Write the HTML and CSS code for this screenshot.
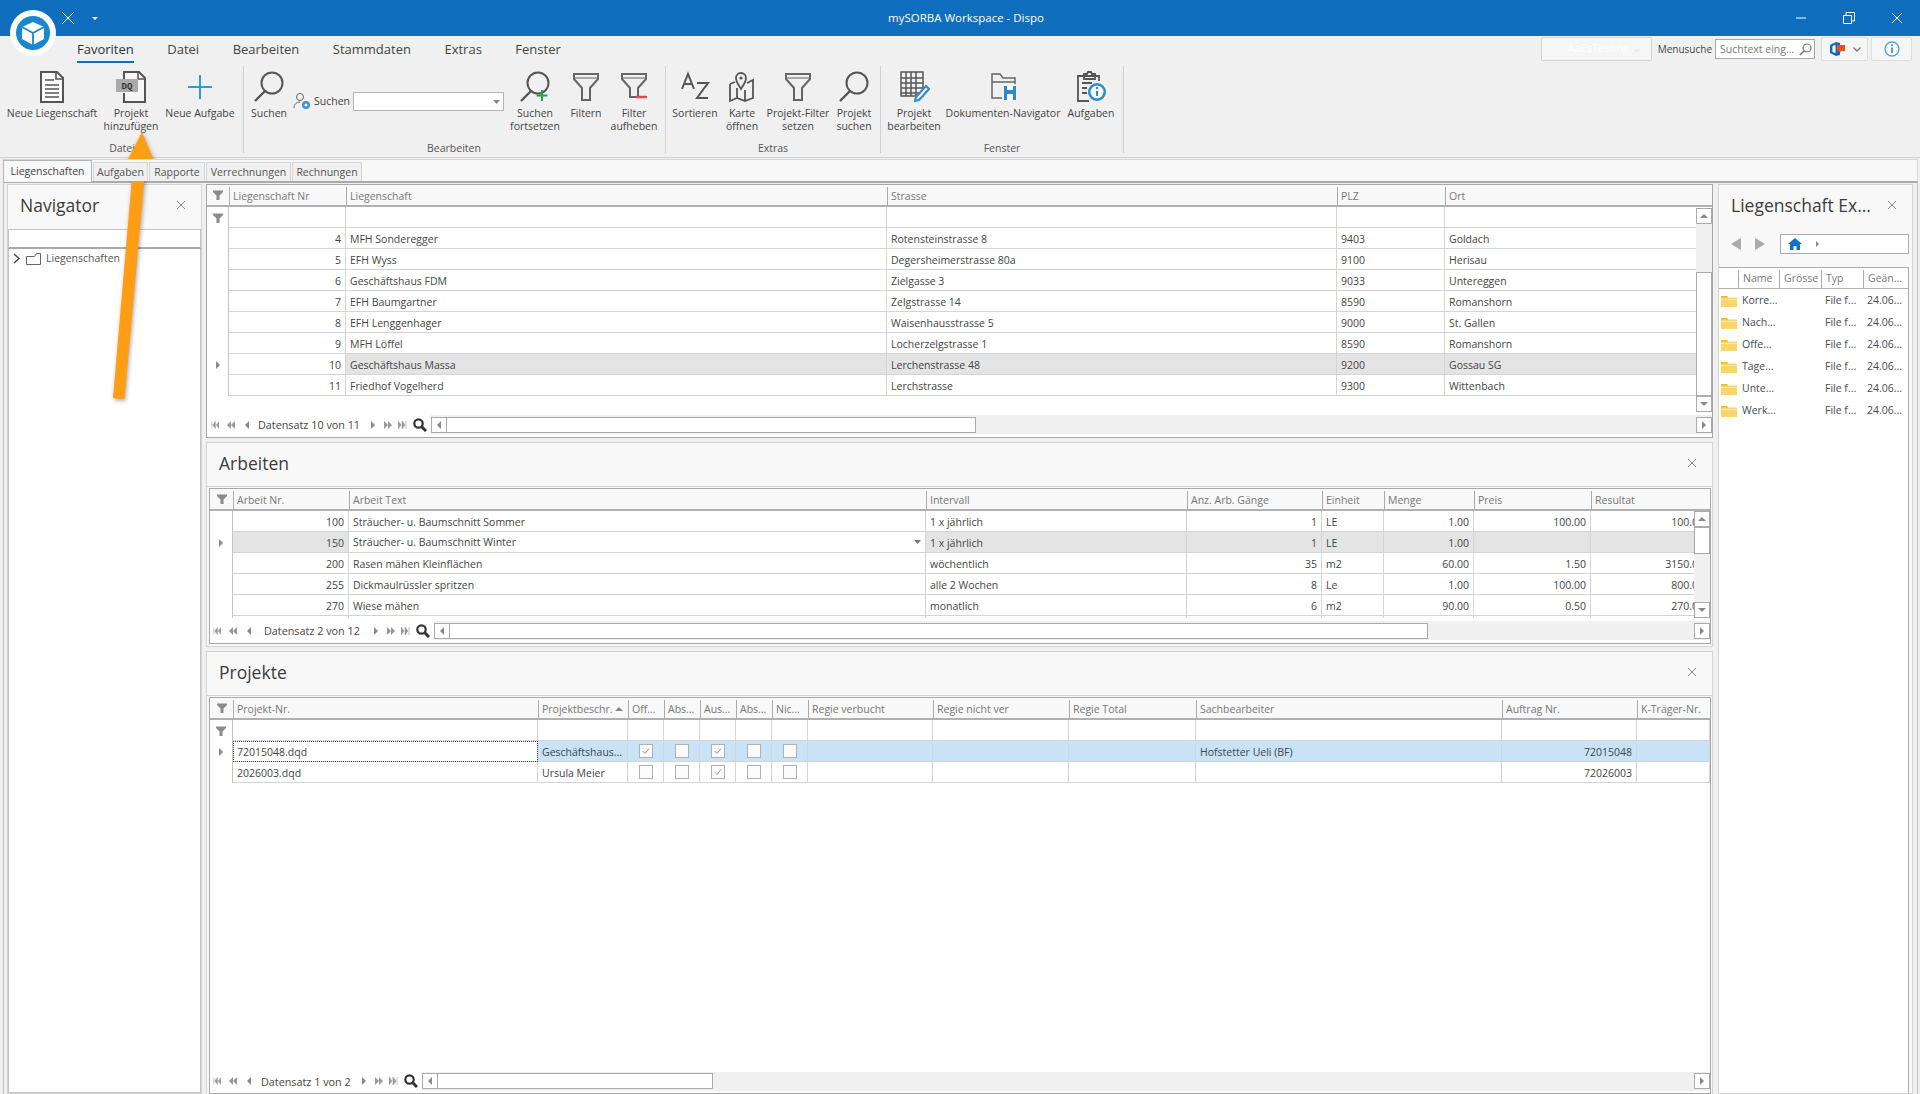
FILE: index.html
```html
<!DOCTYPE html>
<html lang="de">
<head>
    <meta charset="UTF-8">
    <title>mySORBA Workspace - Dispo</title>
    <link rel="stylesheet" href="styles.css">
</head>
<body>

    <svg class="defs" width="0" height="0">
        <symbol id="funnel" viewBox="0 0 12 12"><path d="M1 1.5h10V3L7.5 6.5V11h-3V6.5L1 3z" fill="#8a8a8a"/></symbol>
        <symbol id="big-funnel" viewBox="0 0 32 32"><path d="M4 3h24v5l-8 9v12h-8V17L4 8z" fill="none" stroke="#666" stroke-width="2"/><path d="M5 7h22" stroke="#aaa" stroke-width="2"/></symbol>
        <symbol id="lens" viewBox="0 0 32 32"><circle cx="19" cy="12" r="10.5" fill="none" stroke="#555" stroke-width="2"/><path d="M12 20L2 30" stroke="#555" stroke-width="2.4"/></symbol>
        <symbol id="first" viewBox="0 0 9 8"><path d="M1 0v8M5 0v8L2 4zM9 0v8L6 4z" fill="#999" stroke="#999" stroke-width=".6"/></symbol>
        <symbol id="pprev" viewBox="0 0 8 8"><path d="M4 0v8L0 4zM8 0v8L4 4z" fill="#999"/></symbol>
        <symbol id="prev" viewBox="0 0 4 8"><path d="M4 0v8L0 4z" fill="#888"/></symbol>
        <symbol id="next" viewBox="0 0 4 8"><path d="M0 0v8l4-4z" fill="#888"/></symbol>
        <symbol id="nnext" viewBox="0 0 8 8"><path d="M0 0v8l4-4zM4 0v8l4-4z" fill="#999"/></symbol>
        <symbol id="last" viewBox="0 0 9 8"><path d="M8 0v8M0 0v8l3-4zM4 0v8l3-4z" fill="#999" stroke="#999" stroke-width=".6"/></symbol>
        <symbol id="mag" viewBox="0 0 14 14"><circle cx="5.5" cy="5.5" r="4.2" fill="none" stroke="#333" stroke-width="2.2"/><path d="M8.5 8.5L13 13" stroke="#333" stroke-width="3"/></symbol>
        <symbol id="close" viewBox="0 0 10 10"><path d="M1 1l8 8M9 1l-8 8" stroke="#888" stroke-width="1"/></symbol>
        <symbol id="check" viewBox="0 0 14 14"><path d="M4 7.5l2 2 4-5" fill="none" stroke="#999" stroke-width="1"/></symbol>
        <symbol id="folder" viewBox="0 0 16 11"><path d="M0 0h6l1 1.5h9V11H0z" fill="#fbd56b"/><path d="M0 0h6l1 1.5H0z" fill="#f3b32c"/><path d="M0 3h16v1H0z" fill="#fde9ac"/></symbol>
    </svg>

    <header class="titlebar">
        <svg class="tb-x" width="12" height="12" viewBox="0 0 12 12"><path d="M0 0l12 12M12 0L0 12" stroke="#fff" stroke-width="1"/></svg>
        <svg class="tb-drop" width="6" height="3" viewBox="0 0 6 3"><path d="M0 0h6L3 3z" fill="#fff"/></svg>
        <span class="tb-title">mySORBA Workspace - Dispo</span>
        <div class="tb-win">
            <svg width="12" height="12" viewBox="0 0 12 12"><path d="M1 6h10" stroke="#fff"/></svg>
            <svg width="12" height="12" viewBox="0 0 12 12"><path d="M.5 3.5h8v8h-8zM3 3.5V.5h8.500V9H8.500" fill="none" stroke="#fff"/></svg>
            <svg width="12" height="12" viewBox="0 0 12 12"><path d="M1 1l10 10M11 1L1 11" stroke="#fff"/></svg>
        </div>
    </header>

    <div class="logo">
        <svg width="46" height="46" viewBox="0 0 46 46">
            <circle cx="23" cy="23" r="23" fill="#fff"/>
            <circle cx="23" cy="23" r="17" fill="#1a86d0"/>
            <path d="M23 12l11 5v12l-11 6-11-6V17z" fill="#fff"/>
            <path d="M12 17l11 6 11-6M23 23v12" fill="none" stroke="#1a86d0" stroke-width="1.8"/>
        </svg>
    </div>

    <nav class="menu">
        <span class="menu-item active">Favoriten</span>
        <span class="menu-item">Datei</span>
        <span class="menu-item">Bearbeiten</span>
        <span class="menu-item">Stammdaten</span>
        <span class="menu-item">Extras</span>
        <span class="menu-item">Fenster</span>
        <div class="menu-right">
            <div class="ghost-btn">AaEsTesting <span class="ghost-arrow">&#8964;</span></div>
            <span class="menu-label">Menusuche</span>
            <div class="menu-search">
                <span>Suchtext eing...</span>
                <svg width="13" height="13" viewBox="0 0 13 13"><circle cx="8" cy="5" r="4" fill="none" stroke="#777" stroke-width="1.2"/><path d="M5 8l-4 4" stroke="#777" stroke-width="1.6"/></svg>
            </div>
            <div class="square-btn office">
                <svg width="22" height="14" viewBox="0 0 22 14"><path d="M1 3l6-3 4 1v12l-4 1-6-3z" fill="#0f6cbd"/><path d="M3.5 4l3-1v8l-3-1z" fill="#fff"/><path d="M8 3h8v6h-4l-1 2-1-2H8z" fill="#e8501c"/></svg>
                <svg width="8" height="5" viewBox="0 0 8 5"><path d="M.5.5L4 4 7.5.5" fill="none" stroke="#777" stroke-width="1.3"/></svg>
            </div>
            <div class="square-btn info">
                <svg width="16" height="16" viewBox="0 0 16 16"><circle cx="8" cy="8" r="7" fill="#fff" stroke="#4aa3e0" stroke-width="1.3"/><path d="M8 6.5V12" stroke="#2a86cc" stroke-width="1.6"/><circle cx="8" cy="4.3" r="1" fill="#2a86cc"/></svg>
            </div>
        </div>
    </nav>

    <section class="ribbon">
        <div class="rgroup g-datei">
            <div class="ritems">
                <div class="ritem w92">
                    <svg class="ricon" width="32" height="32" viewBox="0 0 32 32"><path d="M5 1h16l6 6v24H5z" fill="#fff" stroke="#555" stroke-width="2"/><path d="M20 1v7h7M9 9h9M9 14h14M9 18h14M9 22h14M9 26h14" fill="none" stroke="#555" stroke-width="1.6"/></svg>
                    <span>Neue Liegenschaft</span>
                </div>
                <div class="ritem w66">
                    <svg class="ricon" width="32" height="32" viewBox="0 0 32 32"><path d="M9 10V1h15l6 6v24H9V22" fill="#f6f6f6" stroke="#555" stroke-width="2"/><path d="M23 1v7h7" fill="none" stroke="#555" stroke-width="1.5"/><rect x="1" y="8" width="22" height="13" fill="#aaa"/><text x="12" y="18" class="dq">DQ</text></svg>
                    <span>Projekt<br>hinzufügen</span>
                </div>
                <div class="ritem w72">
                    <svg class="ricon" width="32" height="32" viewBox="0 0 32 32"><path d="M16 4v24M4 16h24" stroke="#3a96d6" stroke-width="2"/></svg>
                    <span>Neue Aufgabe</span>
                </div>
            </div>
            <div class="rlabel">Datei</div>
        </div>
        <div class="rgroup g-bearb">
            <div class="ritems">
                <div class="ritem w42">
                    <svg class="ricon"  width="32" height="32"><use href="#lens"/></svg>
                    <span>Suchen</span>
                </div>
                <div class="rsearch">
                    <svg width="18" height="18" viewBox="0 0 18 18"><circle cx="7" cy="5" r="3.5" fill="none" stroke="#666"/><path d="M1 16c0-4 3-6 6-6" fill="none" stroke="#666"/><circle cx="13" cy="13" r="4" fill="#3a96d6"/><circle cx="13" cy="13" r="1.5" fill="#fff"/></svg>
                    <span>Suchen</span>
                    <div class="rcombo"><svg width="7" height="4" viewBox="0 0 7 4"><path d="M0 0h7L3.5 4z" fill="#888"/></svg></div>
                </div>
                <div class="ritem w52">
                    <svg class="ricon" width="32" height="32" viewBox="0 0 32 32"><use href="#lens"/><path d="M23 19v11M17.5 24.5h11" stroke="#2e9e4f" stroke-width="2"/></svg>
                    <span>Suchen<br>fortsetzen</span>
                </div>
                <div class="ritem w50">
                    <svg class="ricon" width="32" height="32"><use href="#big-funnel"/></svg>
                    <span>Filtern</span>
                </div>
                <div class="ritem w46">
                    <svg class="ricon" width="32" height="32" viewBox="0 0 32 32"><path d="M4 3h24v5l-8 9v9h-8V17L4 8z" fill="none" stroke="#666" stroke-width="2"/><path d="M5 7h22" stroke="#aaa" stroke-width="2"/><path d="M18 26h11" stroke="#e04a4a" stroke-width="2.5"/></svg>
                    <span>Filter<br>aufheben</span>
                </div>
            </div>
            <div class="rlabel">Bearbeiten</div>
        </div>
        <div class="rgroup g-extras">
            <div class="ritems">
                <div class="ritem w48">
                    <svg class="ricon" width="32" height="32" viewBox="0 0 32 32"><path d="M3 18L9 3l6 15M5 13h8M18 12h11L18 27h11" fill="none" stroke="#555" stroke-width="2"/></svg>
                    <span>Sortieren</span>
                </div>
                <div class="ritem w46">
                    <svg class="ricon" width="32" height="32" viewBox="0 0 32 32"><path d="M4 13v17l7-3 8 3 8-3V9l-6 3M4 13l5-2M11 17v10M19 19v11" fill="none" stroke="#555" stroke-width="1.8"/><path d="M15 18c-3-5-5-7-5-11a5 5 0 0 1 10 0c0 4-2 6-5 11z" fill="#f0f0f0" stroke="#555" stroke-width="1.8"/><circle cx="15" cy="7" r="1.6" fill="#555"/></svg>
                    <span>Karte<br>öffnen</span>
                </div>
                <div class="ritem w66">
                    <svg class="ricon" width="32" height="32"><use href="#big-funnel"/></svg>
                    <span>Projekt-Filter<br>setzen</span>
                </div>
                <div class="ritem w46">
                    <svg class="ricon" width="32" height="32"><use href="#lens"/></svg>
                    <span>Projekt<br>suchen</span>
                </div>
            </div>
            <div class="rlabel">Extras</div>
        </div>
        <div class="rgroup g-fenster">
            <div class="ritems">
                <div class="ritem w56">
                    <svg class="ricon" width="32" height="32" viewBox="0 0 32 32"><path d="M3 1h22v24H3zM3 7h22M3 12h22M3 17h22M3 22h22M8 1v24M13 1v24M18 1v24" fill="none" stroke="#555" stroke-width="1.5"/><path d="M18 26l10-11 3 3-10 11-4 1z" fill="#fff" stroke="#2a8ad4" stroke-width="2"/></svg>
                    <span>Projekt<br>bearbeiten</span>
                </div>
                <div class="ritem w122">
                    <svg class="ricon" width="32" height="32" viewBox="0 0 32 32"><path d="M15 27H5V3h8l3 4h12v6M5 11h23" fill="none" stroke="#666" stroke-width="1.5"/><path d="M17 15h12v14H17z" fill="#2a8ad4"/><path d="M20 15h6v4h-6zM20 23h6v6h-6z" fill="#fff"/></svg>
                    <span>Dokumenten-Navigator</span>
                </div>
                <div class="ritem w54">
                    <svg class="ricon" width="32" height="32" viewBox="0 0 32 32"><path d="M24 10V5H3v25h11M9 8V3h3l1-2h3l1 2h3v5zM7 12h10M7 17h5M7 22h5" fill="none" stroke="#555" stroke-width="1.8"/><circle cx="22" cy="21" r="9" fill="#2a8ad4"/><circle cx="22" cy="21" r="6.5" fill="#fff"/><path d="M22 20v5" stroke="#2a8ad4" stroke-width="2"/><circle cx="22" cy="17" r="1.2" fill="#2a8ad4"/></svg>
                    <span>Aufgaben</span>
                </div>
            </div>
            <div class="rlabel">Fenster</div>
        </div>
    </section>

    <div class="pagetabs">
        <span class="ptab current">Liegenschaften</span>
        <span class="ptab w-auf">Aufgaben</span>
        <span class="ptab w-rap">Rapporte</span>
        <span class="ptab w-ver">Verrechnungen</span>
        <span class="ptab w-rec">Rechnungen</span>
    </div>

    <main class="workspace">

        <aside class="side navigator">
            <div class="side-head">
                <h2>Navigator</h2>
                <svg width="10" height="10"><use href="#close"/></svg>
            </div>
            <div class="side-input"></div>
            <div class="tree">
                <svg width="8" height="11" viewBox="0 0 8 11"><path d="M1 1l5 4.5L1 10" fill="none" stroke="#444" stroke-width="1.4"/></svg>
                <svg class="tree-folder" width="15" height="12" viewBox="0 0 15 12"><path d="M.5 3.5h8l2-3h4v11H.5z" fill="#fff" stroke="#666"/></svg>
                <span>Liegenschaften</span>
            </div>
        </aside>

        <div class="center">

            <div class="grid grid-one">
                <div class="row head cols-a">
                    <div class="ind"><svg width="12" height="12"><use href="#funnel"/></svg></div>
                    <div class="hc">Liegenschaft Nr</div>
                    <div class="hc">Liegenschaft</div>
                    <div class="hc">Strasse</div>
                    <div class="hc">PLZ</div>
                    <div class="hc">Ort</div>
                </div>
                <div class="grid-main">
                    <div class="rows">
                        <div class="row filter cols-a"><div class="ind"><svg width="12" height="12"><use href="#funnel"/></svg></div><div class="c"></div><div class="c"></div><div class="c"></div><div class="c"></div><div class="c"></div></div>
                        <div class="row cols-a"><div class="ind"></div><div class="c r">4</div><div class="c">MFH Sonderegger</div><div class="c">Rotensteinstrasse 8</div><div class="c">9403</div><div class="c">Goldach</div></div>
                        <div class="row cols-a"><div class="ind"></div><div class="c r">5</div><div class="c">EFH Wyss</div><div class="c">Degersheimerstrasse 80a</div><div class="c">9100</div><div class="c">Herisau</div></div>
                        <div class="row cols-a"><div class="ind"></div><div class="c r">6</div><div class="c">Geschäftshaus FDM</div><div class="c">Zielgasse 3</div><div class="c">9033</div><div class="c">Untereggen</div></div>
                        <div class="row cols-a"><div class="ind"></div><div class="c r">7</div><div class="c">EFH Baumgartner</div><div class="c">Zelgstrasse 14</div><div class="c">8590</div><div class="c">Romanshorn</div></div>
                        <div class="row cols-a"><div class="ind"></div><div class="c r">8</div><div class="c">EFH Lenggenhager</div><div class="c">Waisenhausstrasse 5</div><div class="c">9000</div><div class="c">St. Gallen</div></div>
                        <div class="row cols-a"><div class="ind"></div><div class="c r">9</div><div class="c">MFH Löffel</div><div class="c">Locherzelgstrasse 1</div><div class="c">8590</div><div class="c">Romanshorn</div></div>
                        <div class="row cols-a"><div class="ind"><svg width="4" height="8"><use href="#next"/></svg></div><div class="c r">10</div><div class="c sel">Geschäftshaus Massa</div><div class="c sel">Lerchenstrasse 48</div><div class="c sel">9200</div><div class="c sel">Gossau SG</div></div>
                        <div class="row cols-a"><div class="ind"></div><div class="c r">11</div><div class="c">Friedhof Vogelherd</div><div class="c">Lerchstrasse</div><div class="c">9300</div><div class="c">Wittenbach</div></div>
                    </div>
                    <div class="vscroll vs-one">
                        <div class="sbtn"><svg width="8" height="4" viewBox="0 0 8 4"><path d="M0 4h8L4 0z" fill="#888"/></svg></div>
                        <div class="vtrack"></div>
                        <div class="vthumb"></div>
                        <div class="sbtn"><svg width="8" height="4" viewBox="0 0 8 4"><path d="M0 0h8L4 4z" fill="#888"/></svg></div>
                    </div>
                </div>
                <div class="gnav nav-one">
                    <svg class="n-first" width="8" height="8"><use href="#first"/></svg>
                    <svg class="n-pprev" width="8" height="8"><use href="#pprev"/></svg>
                    <svg class="n-prev" width="4" height="8"><use href="#prev"/></svg>
                    <span class="nav-text">Datensatz 10 von 11</span>
                    <svg class="n-next" width="4" height="8"><use href="#next"/></svg>
                    <svg class="n-nnext" width="8" height="8"><use href="#nnext"/></svg>
                    <svg class="n-last" width="9" height="8"><use href="#last"/></svg>
                    <svg class="n-mag" width="14" height="14"><use href="#mag"/></svg>
                    <div class="hscroll">
                        <div class="sbtn"><svg width="4" height="8"><use href="#prev"/></svg></div>
                        <div class="hthumb"></div>
                        <div class="hrest"></div>
                        <div class="sbtn"><svg width="4" height="8"><use href="#next"/></svg></div>
                    </div>
                </div>
            </div>

            <section class="panel panel-arbeiten">
                <div class="panel-head">
                    <h2>Arbeiten</h2>
                    <svg width="10" height="10"><use href="#close"/></svg>
                </div>
                <div class="grid grid-two">
                    <div class="row head cols-b">
                        <div class="ind"><svg width="12" height="12"><use href="#funnel"/></svg></div>
                        <div class="hc">Arbeit Nr.</div>
                        <div class="hc">Arbeit Text</div>
                        <div class="hc">Intervall</div>
                        <div class="hc">Anz. Arb. Gänge</div>
                        <div class="hc">Einheit</div>
                        <div class="hc">Menge</div>
                        <div class="hc">Preis</div>
                        <div class="hc">Resultat</div>
                    </div>
                    <div class="grid-main">
                        <div class="rows">
                            <div class="row cols-b"><div class="ind"></div><div class="c r">100</div><div class="c">Sträucher- u. Baumschnitt Sommer</div><div class="c">1 x jährlich</div><div class="c r">1</div><div class="c">LE</div><div class="c r">1.00</div><div class="c r">100.00</div><div class="c r">100.00</div></div>
                            <div class="row cols-b"><div class="ind"><svg width="4" height="8"><use href="#next"/></svg></div><div class="c r sel">150</div><div class="c edit">Sträucher- u. Baumschnitt Winter<svg width="7" height="4" viewBox="0 0 7 4"><path d="M0 0h7L3.5 4z" fill="#777"/></svg></div><div class="c sel">1 x jährlich</div><div class="c r sel">1</div><div class="c sel">LE</div><div class="c r sel">1.00</div><div class="c sel"></div><div class="c sel"></div></div>
                            <div class="row cols-b"><div class="ind"></div><div class="c r">200</div><div class="c">Rasen mähen Kleinflächen</div><div class="c">wöchentlich</div><div class="c r">35</div><div class="c">m2</div><div class="c r">60.00</div><div class="c r">1.50</div><div class="c r">3150.00</div></div>
                            <div class="row cols-b"><div class="ind"></div><div class="c r">255</div><div class="c">Dickmaulrüssler spritzen</div><div class="c">alle 2 Wochen</div><div class="c r">8</div><div class="c">Le</div><div class="c r">1.00</div><div class="c r">100.00</div><div class="c r">800.00</div></div>
                            <div class="row cols-b"><div class="ind"></div><div class="c r">270</div><div class="c">Wiese mähen</div><div class="c">monatlich</div><div class="c r">6</div><div class="c">m2</div><div class="c r">90.00</div><div class="c r">0.50</div><div class="c r">270.00</div></div>
                            <div class="row cols-b"><div class="ind"></div><div class="c"></div><div class="c"></div><div class="c"></div><div class="c"></div><div class="c"></div><div class="c"></div><div class="c"></div><div class="c"></div></div>
                        </div>
                        <div class="vscroll vs-two">
                            <div class="sbtn"><svg width="8" height="4" viewBox="0 0 8 4"><path d="M0 4h8L4 0z" fill="#888"/></svg></div>
                            <div class="vthumb"></div>
                            <div class="vtrack"></div>
                            <div class="sbtn"><svg width="8" height="4" viewBox="0 0 8 4"><path d="M0 0h8L4 4z" fill="#888"/></svg></div>
                        </div>
                    </div>
                    <div class="gnav nav-two">
                        <svg class="n-first" width="8" height="8"><use href="#first"/></svg>
                        <svg class="n-pprev" width="8" height="8"><use href="#pprev"/></svg>
                        <svg class="n-prev" width="4" height="8"><use href="#prev"/></svg>
                        <span class="nav-text">Datensatz 2 von 12</span>
                        <svg class="n-next" width="4" height="8"><use href="#next"/></svg>
                        <svg class="n-nnext" width="8" height="8"><use href="#nnext"/></svg>
                        <svg class="n-last" width="9" height="8"><use href="#last"/></svg>
                        <svg class="n-mag" width="14" height="14"><use href="#mag"/></svg>
                        <div class="hscroll">
                            <div class="sbtn"><svg width="4" height="8"><use href="#prev"/></svg></div>
                            <div class="hthumb"></div>
                            <div class="hrest"></div>
                            <div class="sbtn"><svg width="4" height="8"><use href="#next"/></svg></div>
                        </div>
                    </div>
                </div>
            </section>

            <section class="panel panel-projekte">
                <div class="panel-head">
                    <h2>Projekte</h2>
                    <svg width="10" height="10"><use href="#close"/></svg>
                </div>
                <div class="grid grid-three">
                    <div class="row head cols-c">
                        <div class="ind"><svg width="12" height="12"><use href="#funnel"/></svg></div>
                        <div class="hc">Projekt-Nr.</div>
                        <div class="hc">Projektbeschr.<svg class="sort" width="8" height="4" viewBox="0 0 8 4"><path d="M0 4h8L4 0z" fill="#888"/></svg></div>
                        <div class="hc">Off...</div>
                        <div class="hc">Abs...</div>
                        <div class="hc">Aus...</div>
                        <div class="hc">Abs...</div>
                        <div class="hc">Nic...</div>
                        <div class="hc">Regie verbucht</div>
                        <div class="hc">Regie nicht ver</div>
                        <div class="hc">Regie Total</div>
                        <div class="hc">Sachbearbeiter</div>
                        <div class="hc">Auftrag Nr.</div>
                        <div class="hc">K-Träger-Nr.</div>
                    </div>
                    <div class="grid-main">
                        <div class="rows">
                            <div class="row filter cols-c"><div class="ind"><svg width="12" height="12"><use href="#funnel"/></svg></div><div class="c"></div><div class="c"></div><div class="c"></div><div class="c"></div><div class="c"></div><div class="c"></div><div class="c"></div><div class="c"></div><div class="c"></div><div class="c"></div><div class="c"></div><div class="c"></div><div class="c"></div></div>
                            <div class="row cols-c">
                                <div class="ind"><svg width="4" height="8"><use href="#next"/></svg></div>
                                <div class="c focus">72015048.dqd</div>
                                <div class="c act">Geschäftshaus...</div>
                                <div class="c act mid"><span class="cb"><svg width="14" height="14"><use href="#check"/></svg></span></div>
                                <div class="c act mid"><span class="cb"></span></div>
                                <div class="c act mid"><span class="cb"><svg width="14" height="14"><use href="#check"/></svg></span></div>
                                <div class="c act mid"><span class="cb"></span></div>
                                <div class="c act mid"><span class="cb"></span></div>
                                <div class="c act"></div><div class="c act"></div><div class="c act"></div>
                                <div class="c act">Hofstetter Ueli (BF)</div>
                                <div class="c act r">72015048</div>
                                <div class="c act"></div>
                            </div>
                            <div class="row cols-c">
                                <div class="ind"></div>
                                <div class="c">2026003.dqd</div>
                                <div class="c">Ursula Meier</div>
                                <div class="c mid"><span class="cb"></span></div>
                                <div class="c mid"><span class="cb"></span></div>
                                <div class="c mid"><span class="cb"><svg width="14" height="14"><use href="#check"/></svg></span></div>
                                <div class="c mid"><span class="cb"></span></div>
                                <div class="c mid"><span class="cb"></span></div>
                                <div class="c"></div><div class="c"></div><div class="c"></div><div class="c"></div>
                                <div class="c r">72026003</div>
                                <div class="c"></div>
                            </div>
                        </div>
                    </div>
                    <div class="gnav nav-three">
                        <svg class="n-first" width="8" height="8"><use href="#first"/></svg>
                        <svg class="n-pprev" width="8" height="8"><use href="#pprev"/></svg>
                        <svg class="n-prev" width="4" height="8"><use href="#prev"/></svg>
                        <span class="nav-text">Datensatz 1 von 2</span>
                        <svg class="n-next" width="4" height="8"><use href="#next"/></svg>
                        <svg class="n-nnext" width="8" height="8"><use href="#nnext"/></svg>
                        <svg class="n-last" width="9" height="8"><use href="#last"/></svg>
                        <svg class="n-mag" width="14" height="14"><use href="#mag"/></svg>
                        <div class="hscroll">
                            <div class="sbtn"><svg width="4" height="8"><use href="#prev"/></svg></div>
                            <div class="hthumb"></div>
                            <div class="hrest"></div>
                            <div class="sbtn"><svg width="4" height="8"><use href="#next"/></svg></div>
                        </div>
                    </div>
                </div>
            </section>
        </div>

        <aside class="side explorer">
            <div class="side-head">
                <h2>Liegenschaft Ex...</h2>
                <svg width="10" height="10"><use href="#close"/></svg>
            </div>
            <div class="ex-path">
                <svg width="10" height="12" viewBox="0 0 10 12"><path d="M10 0v12L0 6z" fill="#aaa"/></svg>
                <svg width="10" height="12" viewBox="0 0 10 12"><path d="M0 0v12l10-6z" fill="#aaa"/></svg>
                <div class="ex-box">
                    <svg width="14" height="12" viewBox="0 0 14 12"><path d="M7 0l7 6h-2v6H8.5V8h-3v4H2V6H0z" fill="#1070d0"/></svg>
                    <svg width="3" height="6" viewBox="0 0 4 8"><path d="M0 0v8l4-4z" fill="#888"/></svg>
                </div>
            </div>
            <div class="ex-list">
                <div class="ex-row ex-head"><div class="ex-icon"></div><div class="hc">Name</div><div class="hc">Grösse</div><div class="hc">Typ</div><div class="hc">Geän...</div></div>
                <div class="ex-row"><div class="ex-icon"><svg width="16" height="11"><use href="#folder"/></svg></div><div>Korre...</div><div></div><div>File f...</div><div>24.06...</div></div>
                <div class="ex-row"><div class="ex-icon"><svg width="16" height="11"><use href="#folder"/></svg></div><div>Nach...</div><div></div><div>File f...</div><div>24.06...</div></div>
                <div class="ex-row"><div class="ex-icon"><svg width="16" height="11"><use href="#folder"/></svg></div><div>Offe...</div><div></div><div>File f...</div><div>24.06...</div></div>
                <div class="ex-row"><div class="ex-icon"><svg width="16" height="11"><use href="#folder"/></svg></div><div>Tage...</div><div></div><div>File f...</div><div>24.06...</div></div>
                <div class="ex-row"><div class="ex-icon"><svg width="16" height="11"><use href="#folder"/></svg></div><div>Unte...</div><div></div><div>File f...</div><div>24.06...</div></div>
                <div class="ex-row"><div class="ex-icon"><svg width="16" height="11"><use href="#folder"/></svg></div><div>Werk...</div><div></div><div>File f...</div><div>24.06...</div></div>
            </div>
        </aside>
    </main>

    <svg class="arrow" width="180" height="420" viewBox="0 0 180 420">
        <path d="M142 132L155 163L146 161L124.5 399L113 398L133.5 160L125 165Z" fill="#ff9d14"/>
    </svg>

</body>
</html>
```

FILE: styles.css
```css
* {
    box-sizing: border-box;
}
html, body {
    margin: 0;
    height: 100%;
}
body {
    width: 1920px;
    height: 1094px;
    overflow: hidden;
    display: flex;
    flex-direction: column;
    background-color: #f0f0f0;
    font-family: "Open Sans", "Noto Sans", sans-serif;
    font-size: 10.5px;
    color: #444;
}
.defs {
    position: absolute;
}

/* title bar */
.titlebar {
    flex: none;
    height: 36px;
    background-color: #106ebe;
    display: flex;
    align-items: center;
    position: relative;
    color: #fff;
}
.tb-x {
    margin-left: 62px;
}
.tb-drop {
    margin-left: 18px;
}
.tb-title {
    position: absolute;
    left: 888px;
    top: 10px;
    font-size: 11.5px;
}
.tb-win {
    margin-left: auto;
    display: flex;
    gap: 36px;
    padding-right: 17px;
}
.logo {
    position: absolute;
    left: 10px;
    top: 10px;
    width: 46px;
    height: 46px;
}
.arrow {
    position: absolute;
    left: 0;
    top: 0;
    filter: drop-shadow(1px 2px 2px rgba(0, 0, 0, .35));
}

/* menu tabs */
.menu {
    flex: none;
    height: 30px;
    display: flex;
    padding-left: 77px;
    gap: 33.5px;
    font-size: 13px;
    color: #444;
}
.menu-item {
    height: 25px;
    line-height: 25px;
    margin-top: 1px;
    flex: none;
}
.menu-item.active {
    color: #333;
    border-bottom: 2px solid #106ebe;
    height: 26px;
}
.menu-right {
    margin-left: auto;
    display: flex;
    align-items: flex-start;
    padding-right: 8px;
    font-size: 11px;
}
.ghost-btn {
    width: 111px;
    height: 24px;
    margin-top: 1px;
    border: 1px solid #d4d4d4;
    border-radius: 2px;
    background-color: #f6f6f6;
    color: #fff;
    text-align: right;
    padding: 2px 10px 0 0;
    font-size: 11px;
}
.ghost-arrow {
    color: #e4e4e4;
}
.menu-label {
    margin: 6px 3px 0 6px;
    color: #444;
    font-size: 10px;
}
.menu-search {
    width: 100px;
    height: 20px;
    margin-top: 3px;
    border: 1px solid #a8a8a8;
    background-color: #fff;
    display: flex;
    align-items: center;
    justify-content: space-between;
    padding: 0 2px 0 4px;
    color: #777;
    font-size: 10.5px;
}
.square-btn {
    height: 24px;
    margin-top: 1px;
    border: 1px solid #dcdcdc;
    border-radius: 2px;
    background-color: #f6f6f6;
    display: flex;
    align-items: center;
    justify-content: center;
}
.office {
    width: 47px;
    margin-left: 6px;
    gap: 2px;
}
.info {
    width: 41px;
    margin-left: 3px;
}

/* ribbon */
.ribbon {
    flex: none;
    height: 92px;
    display: flex;
    border-bottom: 1px solid #d0d0d0;
}
.rgroup {
    height: 87px;
    display: flex;
    flex-direction: column;
    border-right: 1px solid #d0d0d0;
    flex: none;
}
.g-datei {
    width: 244px;
    padding-left: 6px;
}
.g-bearb {
    width: 422px;
    padding-left: 4px;
}
.g-extras {
    width: 215px;
    padding-left: 5px;
}
.g-fenster {
    width: 243px;
    padding-left: 5px;
}
.ritems {
    display: flex;
    flex: 1;
}
.ritem {
    display: flex;
    flex-direction: column;
    align-items: center;
    text-align: center;
    line-height: 13px;
    white-space: nowrap;
    color: #444;
    padding-top: 5px;
}
.ricon {
    flex: none;
    margin-bottom: 4px;
}
.w42 { width: 42px; }
.w46 { width: 46px; }
.w48 { width: 48px; }
.w50 { width: 50px; }
.w52 { width: 52px; }
.w54 { width: 54px; }
.w56 { width: 56px; }
.w66 { width: 66px; }
.w72 { width: 72px; }
.w92 { width: 92px; }
.w122 { width: 122px; }
.rlabel {
    height: 16px;
    line-height: 14px;
    margin: 0 0 -4px -5px;
    text-align: center;
    color: #555;
}
.rsearch {
    width: 216px;
    margin-left: 3px;
    padding-top: 26px;
    height: 48px;
    display: flex;
    align-items: flex-start;
    gap: 3px;
    line-height: 18px;
}
.rcombo {
    width: 151px;
    height: 19px;
    flex: none;
    border: 1px solid #b4b4b4;
    background-color: #fff;
    display: flex;
    align-items: center;
    justify-content: flex-end;
    padding-right: 3px;
}

/* page tabs */
.pagetabs {
    flex: none;
    height: 22px;
    margin: 1px 2px 0 3px;
    border: 1px solid #d6d6d6;
    border-bottom: none;
    background-color: #f8f8f8;
    display: flex;
    align-items: flex-end;
    position: relative;
    z-index: 1;
}
.ptab {
    height: 19px;
    line-height: 18px;
    text-align: center;
    background-color: #f0f0f0;
    border: 1px solid #d4d4d4;
    border-bottom: none;
    margin-left: 1px;
    color: #555;
    flex: none;
}
.ptab.current {
    width: 89px;
    height: 22px;
    line-height: 20px;
    margin: 0 0 -1px -1px;
    background-color: #f8f8f8;
    border-color: #b4b4b4;
    color: #444;
}
.w-auf { width: 55px; }
.w-rap { width: 56px; }
.w-ver { width: 85px; }
.w-rec { width: 70px; }

/* workspace */
.workspace {
    flex: 1;
    min-height: 0;
    margin: 0 2px 0 3px;
    border-top: 2px solid #aaa;
    border-left: 1px solid #c0c0c0;
    border-right: 1px solid #c0c0c0;
    padding: 1px 4px 0 3px;
    display: flex;
    gap: 4px;
}
.side {
    flex: none;
    width: 195px;
    background-color: #f8f8f8;
    border: 1px solid #d4d4d4;
    display: flex;
    flex-direction: column;
}
.explorer {
    margin-left: 1px;
}
.side-head {
    height: 43px;
    flex: none;
    display: flex;
    align-items: center;
    justify-content: space-between;
    padding: 0 15px 3px 12px;
}
h2 {
    margin: 0;
    font-size: 17.5px;
    font-weight: 400;
    color: #3c3c3c;
}
.side-input {
    flex: none;
    height: 20px;
    margin: 1px 0 0;
    background-color: #fff;
    border: 1px solid #c4c4c4;
    border-bottom: 2px solid #aaa;
}
.tree {
    flex: 1;
    background-color: #fff;
    border: 1px solid #c4c4c4;
    border-top: none;
    display: flex;
    align-items: flex-start;
    padding: 2px 0 0 4px;
    gap: 5px;
    color: #555;
    line-height: 14px;
}
.tree svg {
    margin-top: 2px;
}
.center {
    flex: none;
    width: 1507px;
    display: flex;
    flex-direction: column;
    gap: 4px;
}

/* data grids */
.grid {
    display: flex;
    flex-direction: column;
    background-color: #fff;
    border: 1px solid #a8a8a8;
}
.grid-one {
    flex: none;
    height: 254px;
}
.grid-main {
    flex: 1;
    min-height: 0;
    display: flex;
}
.rows {
    flex: 1;
    min-width: 0;
    overflow: hidden;
}
.row {
    display: grid;
    height: 21px;
    line-height: 22px;
}
.cols-a {
    grid-template-columns: 22px 117px 541px 450px 108px 252px;
}
.head.cols-a {
    grid-template-columns: 22px 117px 541px 450px 108px 1fr;
}
.cols-b {
    grid-template-columns: 23px 116px 577px 261px 135px 62px 90px 117px 118px;
}
.cols-c {
    grid-template-columns: 23px 305px 90px 36px 36px 36px 36px 36px 125px 136px 127px 306px 135px 1fr;
}
.head {
    height: 22px;
    background-color: #f8f8f8;
    border-bottom: 2px solid #b0b0b0;
    flex: none;
    color: #777;
}
.hc {
    margin: 2px 0 0;
    border-left: 1px solid #aaa;
    padding-left: 3px;
    line-height: 18px;
    white-space: nowrap;
    overflow: hidden;
}
.head .ind + .hc {
    border-left-color: #b0b0b0;
}
.sort {
    margin: 0 0 2px 2px;
}
.ind {
    display: flex;
    align-items: center;
    justify-content: center;
    border-right: 1px solid #c4c4c4;
}
.head .ind {
    border-right: none;
}
.c {
    padding: 0 4px;
    border-right: 1px solid #d4d4d4;
    border-bottom: 1px solid #d4d4d4;
    white-space: nowrap;
    overflow: hidden;
}
.r {
    text-align: right;
}
.sel {
    background-color: #e4e4e4;
}
.act {
    background-color: #c8e3f7;
}
.mid {
    display: flex;
    align-items: center;
    justify-content: center;
}
.cb {
    width: 14px;
    height: 14px;
    border: 1px solid #b0b0b0;
    background-color: #fbfbfb;
    display: block;
}
.cb svg {
    display: block;
    margin: -1px;
}
.focus {
    outline: 1px dotted #444;
    outline-offset: -1px;
}
.edit {
    display: flex;
    align-items: center;
    justify-content: space-between;
}

/* scroll bars */
.vscroll {
    flex: none;
    display: flex;
    flex-direction: column;
    width: 16px;
    background-color: #f0f0f0;
}
.vs-one {
    margin-top: 1px;
    background-color: #fff;
}
.vs-one .vtrack {
    height: 48px;
    background-color: #f0f0f0;
}
.vs-one .vthumb {
    flex: 1;
}
.vs-two .vthumb {
    height: 27px;
}
.vs-two .vtrack {
    flex: 1;
}
.vthumb {
    background-color: #fff;
    border: 1px solid #aaa;
}
.sbtn {
    flex: none;
    width: 16px;
    height: 16px;
    background-color: #fff;
    border: 1px solid #aaa;
    display: flex;
    align-items: center;
    justify-content: center;
}
.gnav {
    flex: none;
    height: 25px;
    display: flex;
    align-items: center;
    background-color: #fff;
    color: #444;
}
.gnav > svg {
    flex: none;
}
.nav-text {
    flex: none;
    white-space: nowrap;
    font-size: 10.8px;
}
.n-pprev {
    margin-left: 8px;
}
.n-prev {
    margin-left: 10px;
}
.n-nnext {
    margin-left: 9px;
}
.n-last {
    margin-left: 6px;
}
.n-mag {
    margin-left: 6px;
}
.nav-one {
    padding-left: 4px;
}
.nav-one .nav-text {
    width: 100px;
    margin: 0 13px 0 9px;
}
.nav-one .hthumb {
    width: 529px;
}
.nav-two {
    padding-left: 3px;
}
.nav-two .nav-text {
    width: 95px;
    margin: 0 15px 0 13px;
}
.nav-two .hthumb {
    width: 978px;
}
.nav-three {
    padding-left: 3px;
    height: 24px;
}
.nav-three .nav-text {
    width: 89px;
    margin: 0 12px 0 10px;
}
.nav-three .hthumb {
    width: 275px;
}
.hscroll {
    flex: 1;
    margin-left: 4px;
    height: 19px;
    display: flex;
    align-items: center;
    background-color: #f0f0f0;
}
.hthumb {
    height: 16px;
    background-color: #fff;
    border: 1px solid #aaa;
    border-left: none;
    flex: none;
}
.hrest {
    flex: 1;
}

/* panels */
.panel {
    display: flex;
    flex-direction: column;
    border: 1px solid #d4d4d4;
    background-color: #f8f8f8;
    padding: 0 1px 2px 2px;
}
.panel-arbeiten {
    flex: none;
    height: 205px;
}
.panel-projekte {
    flex: 1;
    min-height: 0;
    padding-bottom: 0;
    margin-bottom: -1px;
}
.panel-head {
    flex: none;
    height: 44px;
    display: flex;
    align-items: center;
    justify-content: space-between;
    padding: 0 15px 4px 12px;
    border-bottom: 1px solid #d4d4d4;
    margin: 0 -1px 1px -2px;
}
.panel .grid {
    flex: 1;
    min-height: 0;
}

/* explorer */
.ex-path {
    flex: none;
    height: 39px;
    display: flex;
    align-items: flex-start;
    padding: 6px 3px 0 12px;
    gap: 14px;
}
.ex-path > svg {
    margin-top: 4px;
}
.ex-box {
    flex: 1;
    height: 20px;
    margin-left: 1px;
    background-color: #fff;
    border: 1px solid #aaa;
    display: flex;
    align-items: center;
    gap: 14px;
    padding-left: 7px;
}
.ex-list {
    flex: 1;
    background-color: #fff;
    margin-right: 3px;
    border-right: 1px solid #aaa;
    border-top: 1px solid #aaa;
}
.ex-row {
    display: grid;
    grid-template-columns: 19px 41px 42px 42px 46px;
    height: 22px;
    line-height: 21px;
    white-space: nowrap;
    color: #4a4a55;
    overflow: hidden;
}
.ex-row > div {
    padding-left: 4px;
}
.ex-head {
    height: 21px;
    line-height: 16px;
    margin-bottom: 1px;
    border-bottom: 1px solid #b0b0b0;
    color: #777;
}
.ex-head .hc {
    line-height: 16px;
}
.ex-row > .ex-icon {
    display: flex;
    align-items: center;
    padding-left: 2px;
}
.dq {
    font-family: "Liberation Mono", monospace;
    font-size: 9px;
    font-weight: 700;
    fill: #333;
    text-anchor: middle;
}
```
